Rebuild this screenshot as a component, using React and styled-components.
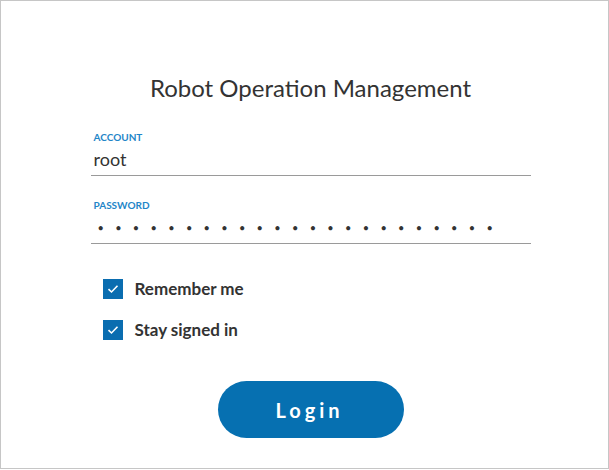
import React, { useState } from "react";
import styled, { createGlobalStyle } from "styled-components";

const GlobalStyle = createGlobalStyle`
  html, body {
    margin: 0;
    padding: 0;
    background: #fff;
    font-family: "Lato", "Open Sans", sans-serif;
  }
`;

const Frame = styled.div`
  box-sizing: border-box;
  width: 609px;
  height: 469px;
  border: 1px solid #c6c6c6;
  background: #fff;
  display: flex;
  flex-direction: column;
  align-items: center;
  padding: 70px 0 0 12px;
`;

const Title = styled.h1`
  margin: 0;
  font-size: 24px;
  font-weight: 400;
  color: #333;
  line-height: 34px;
`;

const Form = styled.form`
  width: 440px;
  margin-top: 26px;
  display: flex;
  flex-direction: column;
`;

const Field = styled.label`
  display: flex;
  flex-direction: column;
  gap: 4px;
  border-bottom: 1px solid #9a9a9a;
  padding: 0 3px 4px;
  margin-bottom: ${(p) => p.$gap || 0}px;
`;

const FieldLabel = styled.span`
  font-size: 10px;
  font-weight: 700;
  color: #1f86c8;
  line-height: 12px;
`;

const Input = styled.input`
  border: none;
  outline: none;
  padding: 0;
  margin: 0;
  background: transparent;
  font-family: "Lato", "Open Sans", sans-serif;
  font-size: 18px;
  color: #333;
  height: 24px;
`;

const PasswordInput = styled(Input)`
  font-size: 11px;
  letter-spacing: 11.3px;
  padding-left: 4px;
`;

const Checks = styled.div`
  display: flex;
  flex-direction: column;
  gap: 20px;
  padding-left: 12px;
  margin-top: 34px;
`;

const CheckRow = styled.label`
  display: flex;
  align-items: center;
  gap: 12px;
  cursor: pointer;
  font-size: 17px;
  font-weight: 700;
  color: #333;
`;

const Box = styled.span`
  width: 20px;
  height: 20px;
  background: ${(p) => (p.$on ? "#0a6db0" : "#fff")};
  border: ${(p) => (p.$on ? "none" : "1px solid #888")};
  box-sizing: border-box;
  display: flex;
  align-items: center;
  justify-content: center;
`;

const Button = styled.button`
  align-self: center;
  margin-top: 41px;
  width: 186px;
  height: 57px;
  border: none;
  border-radius: 29px;
  background: #0670b1;
  color: #fff;
  font-family: "Lato", "Open Sans", sans-serif;
  font-size: 20px;
  font-weight: 700;
  letter-spacing: 4px;
  padding-left: 4px;
  cursor: pointer;
`;

const Check = ({ on, label, onToggle }) => (
  <CheckRow onClick={onToggle}>
    <Box $on={on}>
      {on && (
        <svg width="12" height="10" viewBox="0 0 12 10">
          <path d="M1.5 5.2 L4.5 8 L10.5 1.8" fill="none" stroke="#fff" strokeWidth="1.6" />
        </svg>
      )}
    </Box>
    {label}
  </CheckRow>
);

export default function App() {
  const [remember, setRemember] = useState(true);
  const [stay, setStay] = useState(true);
  return (
    <>
      <GlobalStyle />
      <Frame>
        <Title>Robot Operation Management</Title>
        <Form onSubmit={(e) => e.preventDefault()}>
          <Field $gap={23}>
            <FieldLabel>ACCOUNT</FieldLabel>
            <Input type="text" defaultValue="root" />
          </Field>
          <Field>
            <FieldLabel>PASSWORD</FieldLabel>
            <PasswordInput type="password" defaultValue="abcdefghijklmnopqrstuvw" />
          </Field>
          <Checks>
            <Check on={remember} label="Remember me" onToggle={() => setRemember(!remember)} />
            <Check on={stay} label="Stay signed in" onToggle={() => setStay(!stay)} />
          </Checks>
          <Button type="submit">Login</Button>
        </Form>
      </Frame>
    </>
  );
}
